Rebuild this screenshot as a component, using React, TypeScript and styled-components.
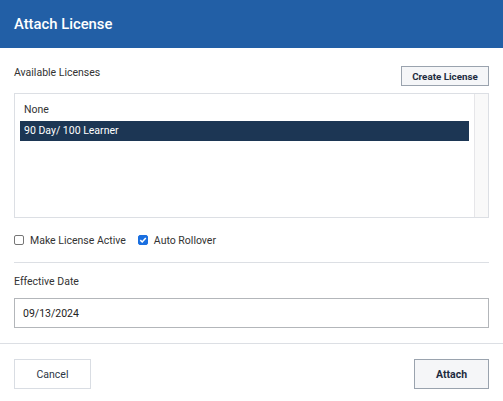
import React from "react";
import styled, { createGlobalStyle } from "styled-components";

const Global = createGlobalStyle`
  html, body { margin: 0; padding: 0; background: #ffffff; }
  body { font-family: Roboto, "Liberation Sans", Arial, sans-serif; color: #333; }
  * { box-sizing: border-box; }
`;

const Dialog = styled.div`
  width: 503px;
  height: 401px;
  background: #fff;
  display: flex;
  flex-direction: column;
`;

const Header = styled.div`
  height: 48px;
  background: #225fa6;
  display: flex;
  align-items: center;
  padding: 0 14px;
`;

const Title = styled.h1`
  margin: 0;
  font-size: 14.8px;
  font-weight: 500;
  color: #fff;
`;

const Body = styled.div`
  padding: 18px 14px 0;
  display: flex;
  flex-direction: column;
`;

const TopRow = styled.div`
  display: flex;
  justify-content: space-between;
  align-items: flex-start;
  height: 20px;
`;

const Label = styled.div<{ $mt?: number }>`
  font-size: 10.5px;
  line-height: 13px;
  color: #333;
  margin-top: ${(p) => p.$mt ?? 0}px;
`;

const Button = styled.button<{ $w: number; $h: number; $primary?: boolean; $fs?: number }>`
  width: ${(p) => p.$w}px;
  height: ${(p) => p.$h}px;
  padding: 0;
  font-family: Roboto, "Liberation Sans", Arial, sans-serif;
  font-size: ${(p) => p.$fs ?? 10.5}px;
  font-weight: ${(p) => (p.$primary ? 700 : 400)};
  color: ${(p) => (p.$primary ? "#1e2c3f" : "#2c3746")};
  background: ${(p) => (p.$primary ? "#f5f6f8" : "#fff")};
  border: 1px solid ${(p) => (p.$primary ? "#9aa3ae" : "#d9dde3")};
  border-radius: 0;
  cursor: pointer;
`;

const ListBox = styled.div`
  margin-top: 7px;
  height: 125px;
  border: 1px solid #dcdfe4;
  display: flex;
`;

const Items = styled.div`
  flex: 1;
  padding: 6px 5px 0;
  display: flex;
  flex-direction: column;
  gap: 1px;
`;

const Item = styled.div<{ $selected?: boolean }>`
  height: 20px;
  line-height: 20px;
  padding-left: 4px;
  font-size: 10.5px;
  color: ${(p) => (p.$selected ? "#fff" : "#333")};
  background: ${(p) => (p.$selected ? "#1c3654" : "transparent")};
`;

const ScrollTrack = styled.div`
  width: 14px;
  background: #f9f9f9;
  border-left: 1px solid #e6e6e9;
`;

const CheckRow = styled.div`
  margin-top: 15px;
  height: 14px;
  display: flex;
  align-items: center;
`;

const CheckItem = styled.label<{ $mr?: number }>`
  display: flex;
  align-items: center;
  gap: 6px;
  margin-right: ${(p) => p.$mr ?? 0}px;
  font-size: 10.5px;
  color: #333;
`;

const Box = styled.span<{ $checked?: boolean }>`
  width: 10px;
  height: 10px;
  border-radius: 2px;
  border: 1px solid ${(p) => (p.$checked ? "#1a6fe0" : "#767676")};
  background: ${(p) => (p.$checked ? "#1a6fe0" : "#fff")};
  display: flex;
  align-items: center;
  justify-content: center;
`;

const Divider = styled.div`
  margin-top: 15px;
  height: 1px;
  background: #dcdfe4;
`;

const DateInput = styled.div`
  margin-top: 10px;
  height: 30px;
  border: 1px solid #b3b6ba;
  display: flex;
  align-items: center;
  padding-left: 8px;
  font-size: 10.5px;
  color: #222;
`;

const Footer = styled.div`
  margin-top: 15px;
  border-top: 1px solid #dcdfe4;
  padding: 15px 14px 0;
  display: flex;
  justify-content: space-between;
`;

const Check = () => (
  <svg width="8" height="8" viewBox="0 0 8 8">
    <path d="M1.3 4.1 L3.2 6 L6.8 1.9" fill="none" stroke="#fff" strokeWidth="1.5" />
  </svg>
);

export default function App() {
  return (
    <>
      <Global />
      <Dialog>
        <Header>
          <Title>Attach License</Title>
        </Header>
        <Body>
          <TopRow>
            <Label>Available Licenses</Label>
            <Button $w={88} $h={20} $primary $fs={9.8}>
              Create License
            </Button>
          </TopRow>
          <ListBox>
            <Items>
              <Item>None</Item>
              <Item $selected>90 Day/ 100 Learner</Item>
            </Items>
            <ScrollTrack />
          </ListBox>
          <CheckRow>
            <CheckItem $mr={12}>
              <Box />
              Make License Active
            </CheckItem>
            <CheckItem>
              <Box $checked>
                <Check />
              </Box>
              Auto Rollover
            </CheckItem>
          </CheckRow>
          <Divider />
          <Label $mt={12}>Effective Date</Label>
          <DateInput>09/13/2024</DateInput>
        </Body>
        <Footer>
          <Button $w={77} $h={30}>Cancel</Button>
          <Button $w={75} $h={30} $primary>
            Attach
          </Button>
        </Footer>
      </Dialog>
    </>
  );
}
